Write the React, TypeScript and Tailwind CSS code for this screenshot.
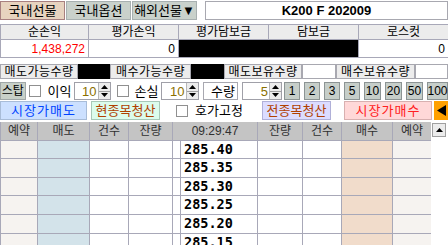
import type { ReactNode } from 'react'

const prices = ['285.40', '285.35', '285.30', '285.25', '285.20', '285.15']
const qtyButtons = ['1', '2', '3', '5', '10', '20', '50', '100']

function UpTri() {
  return (
    <svg width="7" height="4" viewBox="0 0 7 4">
      <polygon points="3.5,0 7,4 0,4" fill="#000" />
    </svg>
  )
}

function DownTri() {
  return (
    <svg width="7" height="4" viewBox="0 0 7 4">
      <polygon points="0,0 7,0 3.5,4" fill="#000" />
    </svg>
  )
}

function Spin({ value, w }: { value: string; w: string }) {
  return (
    <div className={`flex h-[18px] border border-[#a0a0a8] bg-white ${w}`}>
      <div className="flex flex-1 items-center justify-end pr-[1px] text-[13px] text-[#8a7000]">{value}</div>
      <div className="flex w-[12px] flex-col border-l border-[#b8b8b8]">
        <div className="flex flex-1 items-center justify-center border-b border-[#a0a0a0] bg-[#ececec]">
          <UpTri />
        </div>
        <div className="flex flex-1 items-center justify-center bg-[#ececec]">
          <DownTri />
        </div>
      </div>
    </div>
  )
}

function Check() {
  return <div className="h-[12px] w-[12px] border border-[#909090] bg-white" />
}

function Label({ children, w }: { children: ReactNode; w: string }) {
  return (
    <div className={`flex h-full items-center justify-center whitespace-nowrap border border-[#a8a8b0] bg-[#ececec] tracking-[0.5px] ${w}`}>
      {children}
    </div>
  )
}

export default function App() {
  return (
    <div className="h-[245px] w-[448px] overflow-hidden bg-white font-['Liberation_Sans','Noto_Sans_CJK_KR',sans-serif] text-[12px] leading-none text-black">
      {/* market tabs + title */}
      <div className="flex h-[20px] pt-[1px] text-[13px]">
        <div className="flex w-[65px] items-center justify-center border border-[#a88080] bg-[#e7d3bf]">국내선물</div>
        <div className="ml-[1px] flex w-[65px] items-center justify-center border border-[#a8b0b0] bg-[#c9d1cb]">국내옵션</div>
        <div className="ml-[1px] flex w-[65px] items-center justify-center whitespace-nowrap border border-[#a8b0b0] bg-[#c9d1cb]">해외선물▼</div>
        <div className="ml-[8px] flex flex-1 items-center justify-center border border-[#a8a8b0] bg-white text-[13px] font-bold">
          K200 F 202009
        </div>
      </div>

      {/* balance table */}
      <div className="mt-[4px] grid grid-cols-[88px_90px_90px_90px_90px] border-l border-t border-[#a8a8b8]">
        {['순손익', '평가손익', '평가담보금', '담보금', '로스컷'].map((h) => (
          <div key={h} className="flex h-[15px] items-center justify-center border-b border-r border-[#a8a8b8] bg-[#ececec]">
            {h}
          </div>
        ))}
        <div className="flex h-[18px] items-center justify-end border-b border-r border-[#a8a8b8] pr-[3px] text-[#ff0000]">1,438,272</div>
        <div className="flex h-[18px] items-center justify-end border-b border-r border-[#a8a8b8] pr-[3px]">0</div>
        <div className="col-span-2 h-[18px] border-b border-r border-[#a8a8b8] bg-black" />
        <div className="flex h-[18px] items-center justify-end border-b border-r border-[#a8a8b8] pr-[3px]">0</div>
      </div>

      {/* quantities */}
      <div className="mt-[6px] flex h-[15px]">
        <Label w="w-[78px]">매도가능수량</Label>
        <div className="h-full w-[32px] bg-black" />
        <Label w="w-[81px]">매수가능수량</Label>
        <div className="h-full w-[33px] bg-black" />
        <Label w="w-[78px]">매도보유수량</Label>
        <div className="h-full w-[34px] border border-[#a8a8b0] bg-white" />
        <Label w="w-[79px]">매수보유수량</Label>
        <div className="h-full flex-1 border border-[#a8a8b0] bg-white" />
      </div>

      {/* stop row */}
      <div className="mt-[3px] flex h-[18px] items-center">
        <div className="flex h-full w-[26px] items-center justify-center whitespace-nowrap border border-[#a0a8a8] bg-[#c8d0c8] text-[12px]">스탑</div>
        <div className="ml-[3px]"><Check /></div>
        <span className="ml-[7px] w-[27px] text-[13px]">이익</span>
        <Spin value="10" w="w-[37px]" />
        <div className="ml-[6px]"><Check /></div>
        <span className="ml-[6px] w-[27px] text-[13px]">손실</span>
        <Spin value="10" w="w-[38px]" />
        <div className="ml-[4px] flex h-full w-[36px] items-center justify-end border border-[#a8a8b0] bg-white pr-[2px] text-[13px]">수량</div>
        <div className="ml-[4px]"><Spin value="5" w="w-[40px]" /></div>
        <div className="ml-[2px] flex h-full gap-[4px]">
          {qtyButtons.map((q) => (
            <div
              key={q}
              className={`flex h-full items-center justify-center border border-[#8c9494] bg-[#c6cec9] text-[12px] ${q === '100' ? 'w-[21px]' : q.length === 2 ? 'w-[17px]' : 'w-[16px]'}`}
            >
              {q}
            </div>
          ))}
        </div>
      </div>

      {/* order buttons */}
      <div className="mt-[1px] flex h-[19px] items-center text-[13px]">
        <div className="flex h-full w-[87px] items-center justify-center border border-[#a8bcd8] bg-[#cce0ff] tracking-[1px] text-[#0044ff]">시장가매도</div>
        <div className="ml-[4px] flex h-full w-[69px] items-center justify-center border border-[#a8c8b8] bg-[#dcfcec] text-[#b04000]">현종목청산</div>
        <div className="ml-[16px]"><Check /></div>
        <span className="ml-[7px] w-[60px]">호가고정</span>
        <div className="ml-[7px] flex h-full w-[69px] items-center justify-center border border-[#b0b0d8] bg-[#dcdcff] text-[#b04000]">전종목청산</div>
        <div className="ml-[13px] flex h-full w-[88px] items-center justify-center border border-[#d8b0b0] bg-[#ffd8d8] tracking-[1px] text-[#ff2020]">시장가매수</div>
        <div className="ml-[2px] flex h-full flex-1 items-center justify-center bg-[#ffa000]">
          <svg width="9" height="11" viewBox="0 0 9 11">
            <polygon points="9,0 9,11 0,5.5" fill="#000" />
          </svg>
        </div>
      </div>

      {/* hoga grid */}
      <div className="mt-[2px] flex">
        <div className="grid w-[431px] grid-cols-[37px_52px_39px_44px_8px_77px_45px_39px_51px_39px] auto-rows-[18.6px] border-l border-[#a8a8b8]">
          {['예약', '매도', '건수', '잔량'].map((h, i) => (
            <div key={'l' + i} className="flex h-[19px] items-center justify-center border-b border-r border-[#a8a8b8] bg-[#c4c4c4] text-[#303030]">
              {h}
            </div>
          ))}
          <div className="col-span-2 flex h-[19px] items-center justify-center border-b border-r border-[#a8a8b8] bg-[#c4c4c4] text-[#303030]">
            09:29:47
          </div>
          {['잔량', '건수', '매수', '예약'].map((h, i) => (
            <div key={'r' + i} className="flex h-[19px] items-center justify-center border-b border-r border-[#a8a8b8] bg-[#c4c4c4] text-[#303030]">
              {h}
            </div>
          ))}
          {prices.map((p) => (
            <div key={p} className="contents">
              <div className="border-b border-r border-[#a8a8b8] bg-[#f6f3f0]" />
              <div className="border-b border-r border-[#a8a8b8] bg-[#d3e3ea]" />
              <div className="border-b border-r border-[#a8a8b8] bg-white" />
              <div className="border-b border-r border-[#a8a8b8] bg-white" />
              <div className="border-b border-r border-[#a8a8b8] bg-white" />
              <div className="flex items-center border-b border-r border-[#a8a8b8] bg-white pl-[3px] font-['DejaVu_Sans_Mono',monospace] text-[13.5px] font-bold">
                {p}
              </div>
              <div className="border-b border-r border-[#a8a8b8] bg-white" />
              <div className="border-b border-r border-[#a8a8b8] bg-white" />
              <div className="border-b border-r border-[#a8a8b8] bg-[#f1dccb]" />
              <div className="border-b border-r border-[#a8a8b8] bg-[#f6f3f0]" />
            </div>
          ))}
        </div>
        <div className="flex-1 bg-white pl-[1px] pt-[1px]">
          <div className="flex h-[14px] w-[14px] items-center justify-center border border-[#a0a0a0] bg-[#ececec]">
            <svg width="7" height="4" viewBox="0 0 7 4">
              <polygon points="3.5,0 7,4 0,4" fill="#000" />
            </svg>
          </div>
        </div>
      </div>
    </div>
  )
}
